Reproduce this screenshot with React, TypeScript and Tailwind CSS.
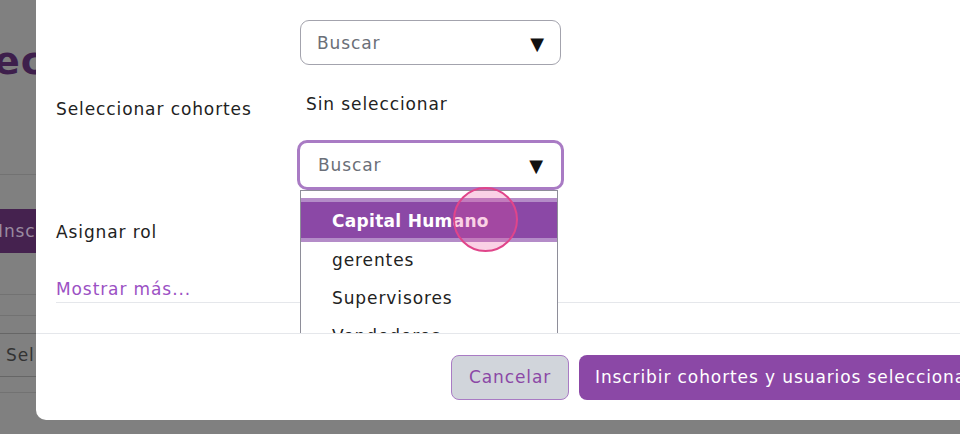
const options = ['Capital Humano', 'gerentes', 'Supervisores', 'Vendedores'];

function Caret() {
  return <span className="text-[18px] leading-none text-[#111] tracking-normal">▼</span>;
}

function BackdropPage() {
  // the page behind the modal, dimmed by the overlay
  return (
    <div className="w-[36px] shrink-0 overflow-hidden bg-[#808080] flex flex-col">
      <div className="h-[175px] border-b border-[#727272] flex items-start">
        <span className="mt-[42px] -ml-[6px] text-[38px] font-bold leading-none text-[#3e1f4c] whitespace-nowrap">
          ec
        </span>
      </div>
      <div className="h-[34px]" />
      <div className="h-[44px] bg-[#45224f] flex items-center pt-[2px]">
        <span className="-ml-[2px] text-[17px] text-[#9a8aa0] whitespace-nowrap">Insc</span>
      </div>
      <div className="h-[42px] border-b border-[#727272]" />
      <div className="h-[21px] border-b border-[#727272]" />
      <div className="h-[17px]" />
      <div className="h-[44px] border-y border-[#666] flex items-center pt-[2px]">
        <span className="ml-[6px] text-[17px] text-[#333] whitespace-nowrap">Sel</span>
      </div>
      <div className="h-[16px] border-b border-[#727272]" />
      <div className="flex-1" />
    </div>
  );
}

export default function App() {
  return (
    <div
      className="w-[960px] h-[434px] overflow-hidden bg-[#808080] flex tracking-[0.9px]"
      style={{ fontFamily: '"DejaVu Sans", "Noto Sans", sans-serif' }}
    >
      <BackdropPage />
      <div className="w-[1100px] shrink-0 h-[420px] bg-white rounded-bl-[10px] flex flex-col">
        {/* body */}
        <div className="h-[334px] overflow-hidden border-b border-[#e5e7eb] relative">
          <div className="flex">
            <div className="w-[264px] shrink-0 pl-[20px] flex flex-col text-[17px] text-[#222]">
              <div className="h-[92px]" />
              <div className="h-[36px] flex items-center">Seleccionar cohortes</div>
              <div className="h-[87px]" />
              <div className="h-[36px] flex items-center">Asignar rol</div>
              <div className="h-[21px]" />
              <div className="h-[36px] flex items-center text-[#9b51c4]">Mostrar más...</div>
            </div>
            <div className="flex flex-col">
              <div className="h-[20px]" />
              <div className="w-[261px] h-[45px] rounded-[9px] border border-[#a3a3ad] flex items-center justify-between pl-[16px] pr-[16px] pt-[2px]">
                <span className="text-[17px] text-[#6b6f78]">Buscar</span>
                <Caret />
              </div>
              <div className="h-[38px] flex items-center pl-[6px] mt-[21px] text-[17px] text-[#222]">
                Sin seleccionar
              </div>
              <div className="h-[16px]" />
              <div className="-ml-[3px] w-[267px] h-[50px] rounded-[10px] border-[3px] border-[#a97bc4] flex items-center justify-between pl-[18px] pr-[18px] pt-[2px]">
                <span className="text-[17px] text-[#6b6f78]">Buscar</span>
                <Caret />
              </div>
              <div className="w-[258px] h-[200px] border-x border-t border-[#8e8e99] bg-white flex flex-col relative z-10">
                <div className="h-[7px]" />
                {options.map((o, i) =>
                  i === 0 ? (
                    <div
                      key={o}
                      className="h-[44px] bg-[#8b48a6] border-y-[4px] border-[#b48cc8] flex items-center pl-[31px] pt-[3px] text-[17px] font-bold text-white relative tracking-[0.3px]"
                    >
                      {o}
                      <span className="absolute left-[152px] top-[-15px] w-[65px] h-[65px] rounded-full border-2 border-[#e0458a] bg-[#ec4899]/25" />
                    </div>
                  ) : (
                    <div key={o} className="h-[38px] flex items-center pl-[31px] text-[17px] text-[#222]">
                      {o}
                    </div>
                  ),
                )}
              </div>
            </div>
          </div>
          <div className="absolute left-[20px] right-0 top-[302px] border-t border-[#e5e7eb]" />
        </div>
        {/* footer */}
        <div className="flex-1 flex items-center pl-[415px] gap-[10px]">
          <button className="w-[118px] h-[45px] rounded-[8px] bg-[#d1d5db] border border-[#a97bc4] pt-[2px] text-[17px] text-[#8b48a6]">
            Cancelar
          </button>
          <button className="h-[45px] px-[16px] rounded-[8px] bg-[#8b48a6] pt-[2px] text-[17px] text-white whitespace-nowrap">
            Inscribir cohortes y usuarios seleccionados
          </button>
        </div>
      </div>
    </div>
  );
}
